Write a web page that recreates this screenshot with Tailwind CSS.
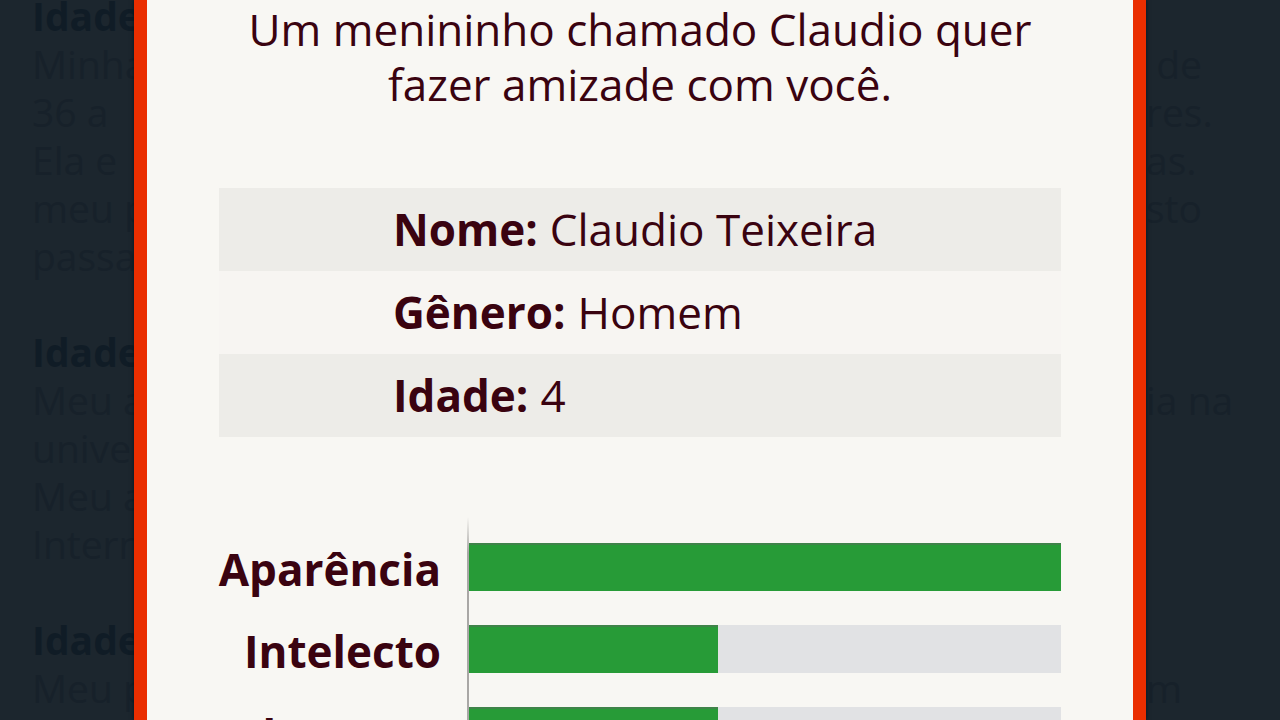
<!DOCTYPE html>
<html lang="pt-BR">
<head>
  <meta charset="UTF-8" />
  <meta name="viewport" content="width=device-width, initial-scale=1" />
  <title>Nova amizade</title>
  <script src="https://cdn.jsdelivr.net/npm/@tailwindcss/browser@4"></script>
</head>

<body class="h-screen overflow-hidden bg-[#1c262e] font-['Open_Sans',sans-serif]">
  <div class="relative h-full overflow-hidden">

    <!-- Life log, dimmed behind the dialog -->
    <div class="-mt-2 flex justify-between whitespace-nowrap pl-8 text-[39px] leading-[48px] text-[#17212a]" aria-hidden="true">
      <div>
        <p class="font-bold text-[#101c26]">Idade:</p>
        <p>Minha</p>
        <p>36 a</p>
        <p>Ela e</p>
        <p>meu p</p>
        <p>passa</p>
        <p class="mt-12 font-bold text-[#101c26]">Idade:</p>
        <p>Meu a</p>
        <p>univer</p>
        <p>Meu a</p>
        <p>Intern</p>
        <p class="mt-12 font-bold text-[#101c26]">Idade:</p>
        <p>Meu p</p>
      </div>
      <div class="w-[134px] pt-12">
        <p>&nbsp;de</p>
        <p>res.</p>
        <p>as.</p>
        <p>sto</p>
        <p class="mt-36">ia na</p>
        <p class="mt-60">m</p>
      </div>
    </div>

    <!-- Dialog -->
    <div class="absolute inset-0 flex px-[134px]">
      <main role="dialog" aria-labelledby="message" class="flex-1 border-x-[13px] border-[#ea2e00] bg-[#f8f7f3] px-[72px] pt-0.5 text-[44px] text-[#3a0310] shadow-[0_0_4px_#001420]">
        <p id="message" class="text-center leading-[55px]">Um menininho chamado Claudio quer<br />fazer amizade com você.</p>

        <dl class="mt-[76px] leading-[83px]">
          <div class="flex gap-3 bg-[#edece8] pl-[174px]">
            <dt class="font-bold">Nome:</dt>
            <dd>Claudio Teixeira</dd>
          </div>
          <div class="flex gap-3 bg-[#f7f5f2] pl-[174px]">
            <dt class="font-bold">Gênero:</dt>
            <dd>Homem</dd>
          </div>
          <div class="flex gap-3 bg-[#edece8] pl-[174px]">
            <dt class="font-bold">Idade:</dt>
            <dd>4</dd>
          </div>
        </dl>

        <div class="mt-20 flex font-bold leading-[48px]">
          <div class="flex w-[248px] flex-col items-end gap-[34px] pr-[26px] pt-7">
            <span>Aparência</span>
            <span>Intelecto</span>
            <span>Loucura</span>
          </div>
          <div class="w-0.5 bg-linear-to-b from-transparent to-[#a9a7a5] to-15%"></div>
          <div class="flex flex-1 flex-col gap-[34px] pt-[26px]">
            <div class="h-12 bg-[#e1e2e4]"><div class="h-full border-t-2 border-[#3f8349] bg-[#279b37]" style="width: 100%"></div></div>
            <div class="h-12 bg-[#e1e2e4]"><div class="h-full border-t-2 border-[#3f8349] bg-[#279b37]" style="width: 42%"></div></div>
            <div class="h-12 bg-[#e1e2e4]"><div class="h-full border-t-2 border-[#3f8349] bg-[#279b37]" style="width: 42%"></div></div>
          </div>
        </div>
      </main>
    </div>
  </div>
</body>
</html>
